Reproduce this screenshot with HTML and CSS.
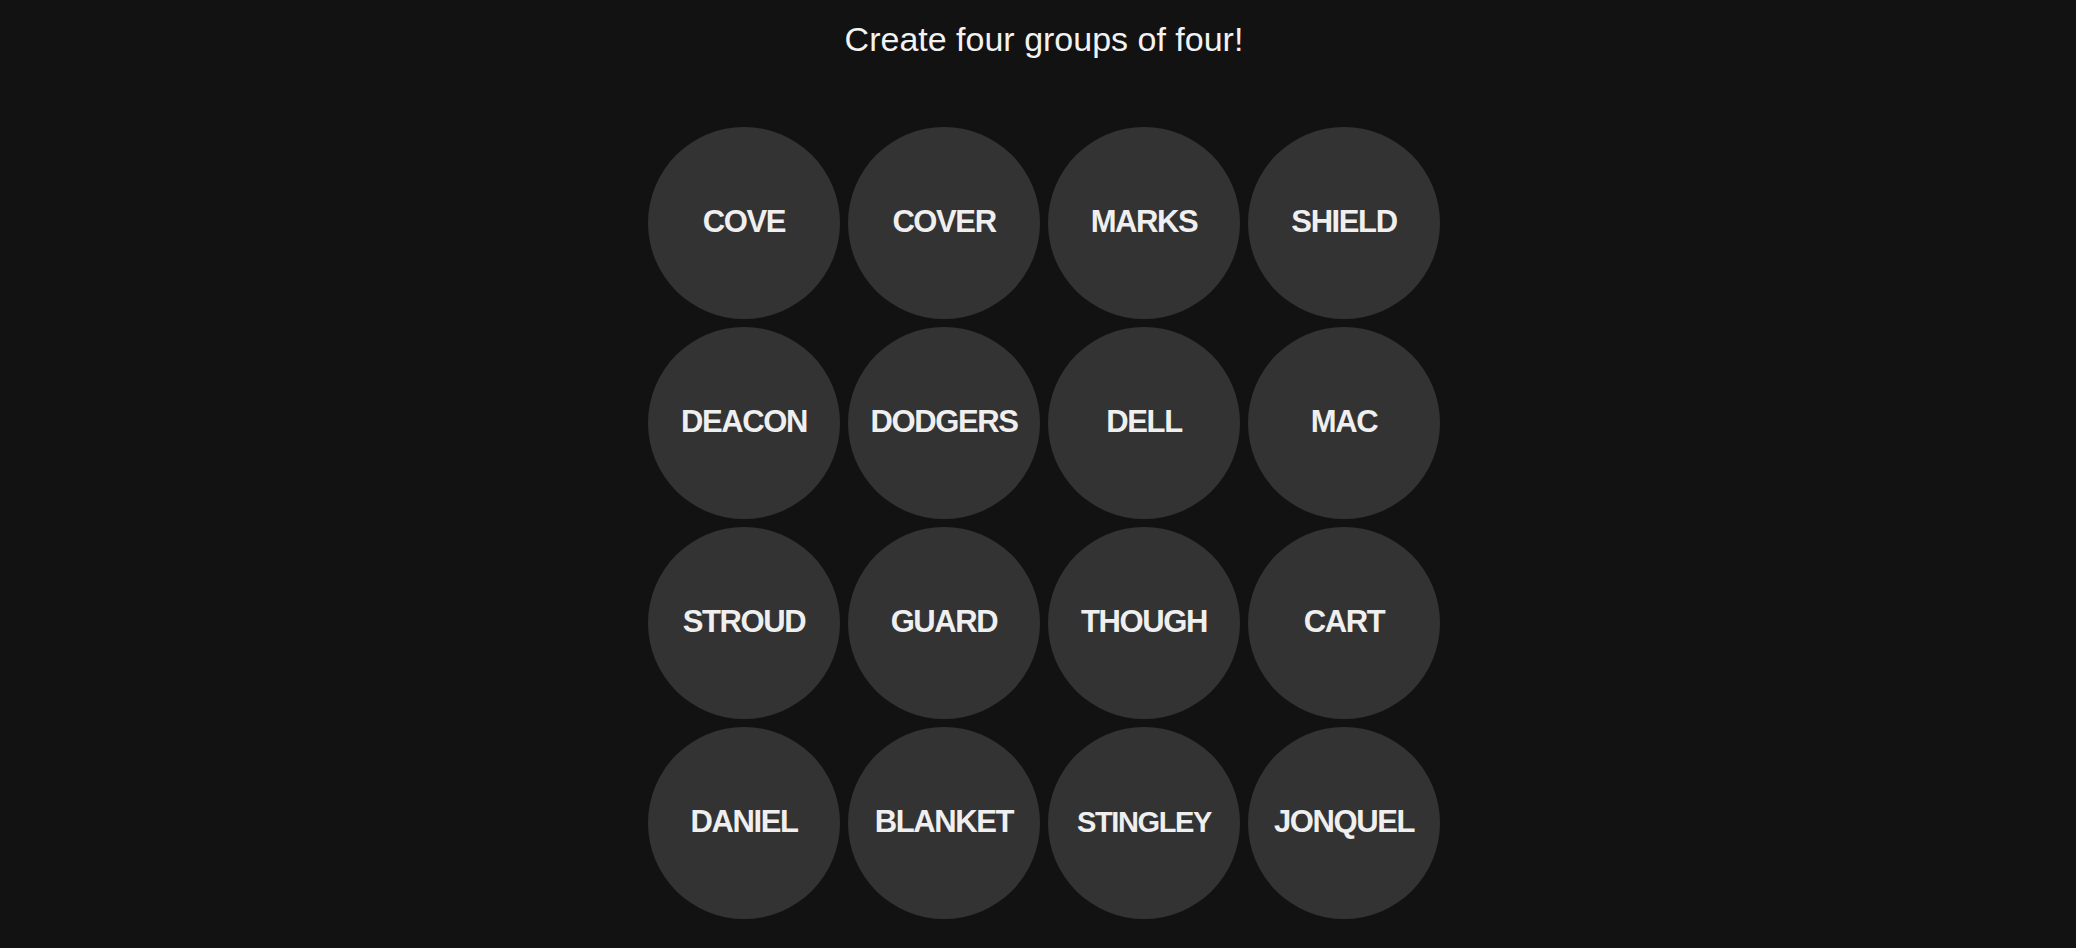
FILE: index.html
```html
<!DOCTYPE html>
<html lang="en">
<head>
    <meta charset="UTF-8">
    <meta name="viewport" content="width=device-width, initial-scale=1.0">
    <title>Connections</title>
    <link rel="stylesheet" href="styles.css">
</head>
<body>

    <main class="game">
        <h1 class="prompt">Create four groups of four!</h1>

        <div class="board">
            <button class="word">COVE</button>
            <button class="word">COVER</button>
            <button class="word">MARKS</button>
            <button class="word">SHIELD</button>
            <button class="word">DEACON</button>
            <button class="word">DODGERS</button>
            <button class="word">DELL</button>
            <button class="word">MAC</button>
            <button class="word">STROUD</button>
            <button class="word">GUARD</button>
            <button class="word">THOUGH</button>
            <button class="word">CART</button>
            <button class="word">DANIEL</button>
            <button class="word">BLANKET</button>
            <button class="word small">STINGLEY</button>
            <button class="word">JONQUEL</button>
        </div>
    </main>

</body>
</html>
```

FILE: styles.css
```css
body {
    margin: 0;
    padding: 0;
    background-color: #121212;
    color: #f2f2f2;
    font-family: 'Liberation Sans', Arial, sans-serif;
}
.game {
    display: flex;
    flex-direction: column;
    align-items: center;
    padding: 20px 0 0 12px;
}
.prompt {
    margin: 0;
    font-size: 34px;
    font-weight: normal;
    line-height: 39px;
}
.board {
    display: grid;
    grid-template-columns: repeat(4, 192px);
    grid-auto-rows: 192px;
    gap: 8px;
    margin-top: 68px;
}
.word {
    width: 192px;
    height: 192px;
    border: none;
    border-radius: 50%;
    background-color: #333333;
    color: #efefef;
    font-family: 'Liberation Sans', Arial, sans-serif;
    font-size: 31px;
    font-weight: bold;
    letter-spacing: -1.4px;
    padding: 0 0 2px;
    cursor: pointer;
}
.word.small {
    font-size: 29px;
}
```
